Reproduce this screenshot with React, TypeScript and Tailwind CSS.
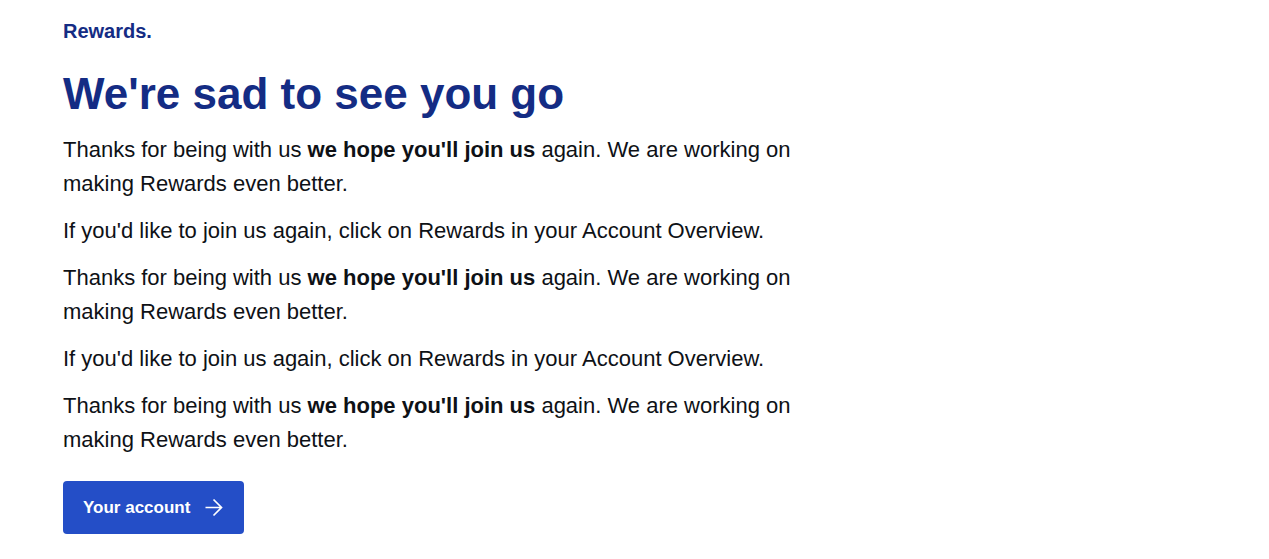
import React from "react";

function Thanks() {
  return (
    <p>
      Thanks for being with us <strong className="font-bold">we hope you'll join us</strong> again. We are working on
      making Rewards even better.
    </p>
  );
}

function Rejoin() {
  return <p>If you'd like to join us again, click on Rewards in your Account Overview.</p>;
}

export default function App() {
  return (
    <main className="bg-white px-[63px] pt-4 pb-6 font-['Liberation_Sans',Arial,sans-serif] text-[#0e1116]">
      <div className="text-[20px] leading-[30px] font-bold text-[#142c84]">Rewards.</div>
      <h1 className="mt-5 text-[44px] leading-[55px] font-bold text-[#142c84]">We're sad to see you go</h1>
      <div className="mt-3 flex max-w-[740px] flex-col gap-[13px] text-[22px] leading-[34px]">
        <Thanks />
        <Rejoin />
        <Thanks />
        <Rejoin />
        <Thanks />
      </div>
      <button type="button" className="mt-6 flex h-[53px] items-center gap-3.5 rounded bg-[#244ec7] px-5 text-[17px] font-bold text-white">
        Your account
        <svg className="size-5" viewBox="0 0 20 20" fill="none" stroke="currentColor" strokeWidth="1.7" aria-hidden="true">
          <path d="M1.5 9.5h16M9.5 1.5l8 8-8 8" />
        </svg>
      </button>
    </main>
  );
}
